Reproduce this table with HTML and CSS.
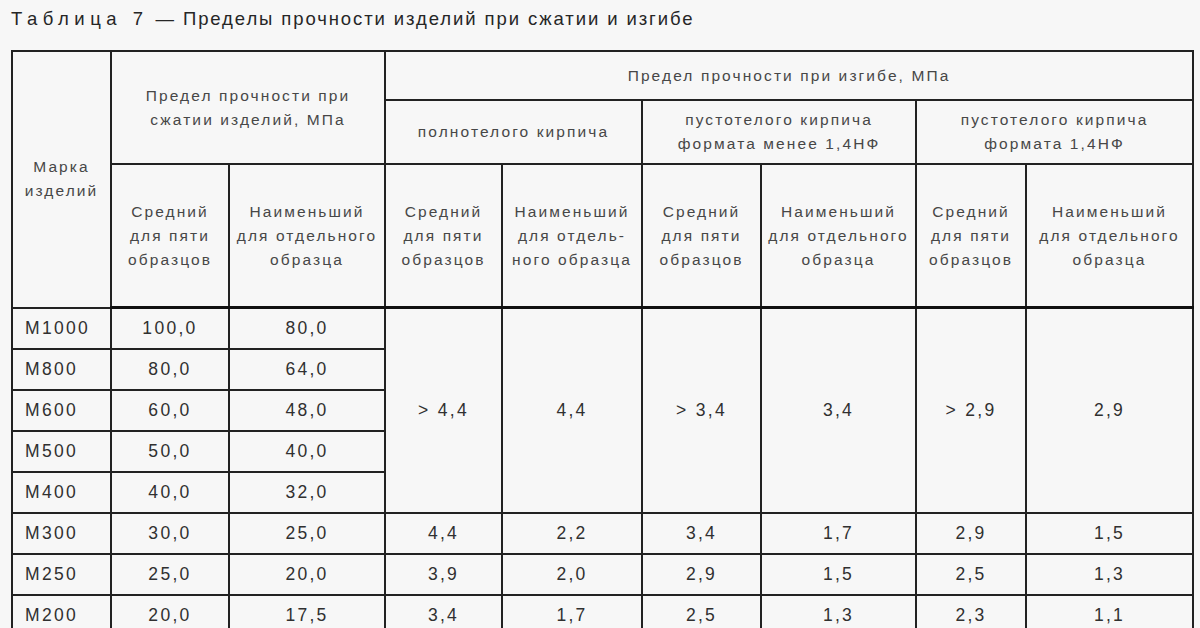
FILE: index.html
```html
<!DOCTYPE html>
<html lang="ru">
<head>
<meta charset="utf-8">
<title>Таблица 7</title>
<link rel="stylesheet" href="styles.css">
</head>
<body>
<div class="page">
  <h1 class="title"><span class="spaced">Таблица 7</span> — Пределы прочности изделий при сжатии и изгибе</h1>
  <table class="grid">
    <colgroup>
      <col class="c1"><col class="c2"><col class="c3"><col class="c4"><col class="c5"><col class="c6"><col class="c7"><col class="c8"><col class="c9">
    </colgroup>
    <thead>
      <tr class="ha">
        <th rowspan="3" class="mark">Марка<br>изделий</th>
        <th rowspan="2" colspan="2">Предел прочности при<br>сжатии изделий, МПа</th>
        <th colspan="6">Предел прочности при изгибе, МПа</th>
      </tr>
      <tr class="hb">
        <th colspan="2">полнотелого кирпича</th>
        <th colspan="2">пустотелого кирпича<br>формата менее 1,4НФ</th>
        <th colspan="2">пустотелого кирпича<br>формата 1,4НФ</th>
      </tr>
      <tr class="hc">
        <th>Средний<br>для пяти<br>образцов</th>
        <th>Наименьший<br>для отдельного<br>образца</th>
        <th>Средний<br>для пяти<br>образцов</th>
        <th>Наименьший<br>для отдель-<br>ного образца</th>
        <th>Средний<br>для пяти<br>образцов</th>
        <th>Наименьший<br>для отдельного<br>образца</th>
        <th>Средний<br>для пяти<br>образцов</th>
        <th>Наименьший<br>для отдельного<br>образца</th>
      </tr>
    </thead>
    <tbody>
      <tr><td class="m">М1000</td><td>100,0</td><td>80,0</td>
        <td rowspan="5">&gt; 4,4</td><td rowspan="5">4,4</td><td rowspan="5">&gt; 3,4</td><td rowspan="5">3,4</td><td rowspan="5">&gt; 2,9</td><td rowspan="5">2,9</td></tr>
      <tr><td class="m">М800</td><td>80,0</td><td>64,0</td></tr>
      <tr><td class="m">М600</td><td>60,0</td><td>48,0</td></tr>
      <tr><td class="m">М500</td><td>50,0</td><td>40,0</td></tr>
      <tr><td class="m">М400</td><td>40,0</td><td>32,0</td></tr>
      <tr><td class="m">М300</td><td>30,0</td><td>25,0</td><td>4,4</td><td>2,2</td><td>3,4</td><td>1,7</td><td>2,9</td><td>1,5</td></tr>
      <tr><td class="m">М250</td><td>25,0</td><td>20,0</td><td>3,9</td><td>2,0</td><td>2,9</td><td>1,5</td><td>2,5</td><td>1,3</td></tr>
      <tr><td class="m">М200</td><td>20,0</td><td>17,5</td><td>3,4</td><td>1,7</td><td>2,5</td><td>1,3</td><td>2,3</td><td>1,1</td></tr>
    </tbody>
  </table>
</div>
</body>
</html>
```
FILE: styles.css
```css
html, body {
  margin: 0;
  padding: 0;
  background: #f7f7f7;
}
.page {
  padding: 9px 0 0 11px;
  font-family: "Liberation Sans", Arial, sans-serif;
  color: #333;
}
.title {
  margin: 0 0 21px 0;
  font-size: 18.5px;
  font-weight: normal;
  line-height: 20px;
  color: #262626;
  letter-spacing: 1.9px;
}
.spaced {
  letter-spacing: 5.5px;
}
.grid {
  border-collapse: collapse;
  table-layout: fixed;
  width: 1181px;
}
.c1 { width: 99px; }
.c2 { width: 118px; }
.c3 { width: 156px; }
.c4 { width: 117px; }
.c5 { width: 140px; }
.c6 { width: 119px; }
.c7 { width: 155px; }
.c8 { width: 110px; }
.c9 { width: 167px; }
.grid th, .grid td {
  border: 2px solid #222;
  padding: 0;
  text-align: center;
  vertical-align: middle;
  white-space: nowrap;
}
.grid th {
  font-weight: normal;
  font-size: 15.5px;
  line-height: 24px;
  color: #474747;
  letter-spacing: 2.1px;
}
.ha th { height: 47px; }
.hb th { height: 62px; }
.hc th {
  height: 141px;
  border-bottom: 3px solid #111;
}
.grid td {
  height: 39px;
  font-size: 17.5px;
  color: #303030;
  letter-spacing: 2.3px;
}
.grid td.m {
  text-align: left;
  padding-left: 12px;
}
```
